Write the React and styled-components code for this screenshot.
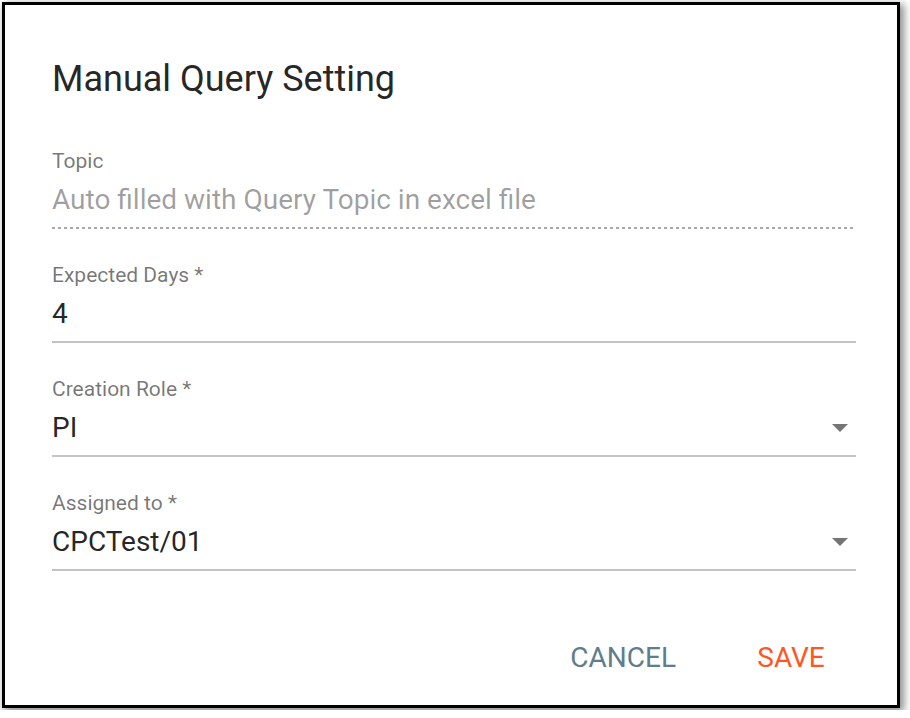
import React from 'react'
import styled, { createGlobalStyle } from 'styled-components'

const GlobalStyle = createGlobalStyle`
    html, body {
        margin: 0;
        padding: 0;
        background: #ffffff;
    }
    body {
        font-family: Roboto, "Liberation Sans", sans-serif;
    }
`

const Frame = styled.div`
    box-sizing: border-box;
    width: 898px;
    height: 706px;
    margin: 2px;
    border: 3px solid #000000;
    background: #ffffff;
    box-shadow: 3px 3px 8px 1px rgba(0, 0, 0, 0.45);
    display: flex;
    flex-direction: column;
`

const Body = styled.div`
    padding: 54px 41px 0 47px;
    display: flex;
    flex-direction: column;
`

const Title = styled.h3`
    margin: 0 0 50px 0;
    font-size: 36px;
    line-height: 40px;
    font-weight: 400;
    color: rgba(0, 0, 0, 0.87);
`

const Field = styled.div`
    display: flex;
    flex-direction: column;
    margin-bottom: 34px;
    border-bottom: 2px solid #c4c4c4;
    padding-bottom: 11px;

    ${({ $dotted }) => $dotted && `
        border-bottom: none;
        padding-bottom: 13px;
        background-image: linear-gradient(to right, #a8a8a8 50%, transparent 50%);
        background-size: 6px 2px;
        background-repeat: repeat-x;
        background-position: left bottom;
    `}
`

const Label = styled.label`
    font-size: 21px;
    line-height: 24px;
    color: rgba(0, 0, 0, 0.54);
    margin-bottom: 11px;
`

const ValueRow = styled.div`
    display: flex;
    align-items: center;
    justify-content: space-between;
    height: 32px;
`

const Value = styled.span`
    font-size: 28px;
    line-height: 32px;
    color: ${({ $muted }) => ($muted ? 'rgba(0, 0, 0, 0.38)' : 'rgba(0, 0, 0, 0.87)')};
`

const Arrow = styled.svg`
    width: 16px;
    height: 8px;
    margin-right: 8px;
    fill: #757575;
`

const Actions = styled.div`
    margin-top: auto;
    padding: 0 29px 16px 0;
    display: flex;
    justify-content: flex-end;
    gap: 10px;
`

const ActionButton = styled.button`
    min-width: 154px;
    height: 63px;
    padding: 0 28px;
    border: 0;
    background: transparent;
    font-family: Roboto, "Liberation Sans", sans-serif;
    font-size: 28px;
    line-height: 63px;
    font-weight: 400;
    text-transform: uppercase;
    color: ${({ $tone }) => ($tone === 'primary' ? '#ff5722' : '#607d8b')};
    cursor: pointer;
`

const DropArrow = () => (
    <Arrow viewBox="7 10 10 5">
        <path d="M7 10l5 5 5-5z" />
    </Arrow>
)

const fields = [
    { label: 'Expected Days *', value: '4' },
    { label: 'Creation Role *', value: 'PI', select: true },
    { label: 'Assigned to *', value: 'CPCTest/01', select: true },
]

const App = () => (
    <>
        <GlobalStyle />
        <Frame>
            <Body>
                <Title>Manual Query Setting</Title>
                <Field $dotted>
                    <Label>Topic</Label>
                    <ValueRow>
                        <Value $muted>Auto filled with Query Topic in excel file</Value>
                    </ValueRow>
                </Field>
                {fields.map((f) => (
                    <Field key={f.label}>
                        <Label>{f.label}</Label>
                        <ValueRow>
                            <Value>{f.value}</Value>
                            {f.select ? <DropArrow /> : null}
                        </ValueRow>
                    </Field>
                ))}
            </Body>
            <Actions>
                <ActionButton>Cancel</ActionButton>
                <ActionButton $tone="primary">Save</ActionButton>
            </Actions>
        </Frame>
    </>
)

export default App
